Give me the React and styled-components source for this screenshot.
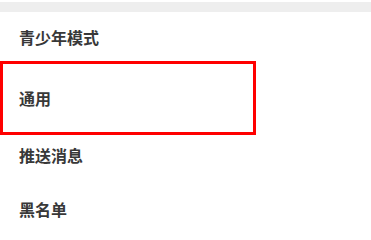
import React from "react";
import styled, { createGlobalStyle } from "styled-components";

const Global = createGlobalStyle`
  html, body { margin: 0; padding: 0; background: #fff; }
  body { font-family: "Noto Sans CJK SC", "Noto Sans", sans-serif; }
`;

const Page = styled.div`
  width: 371px;
  height: 227px;
  overflow: hidden;
  background: #fff;
  padding-top: 2px;
  box-sizing: border-box;
`;

const Divider = styled.div`
  height: 10px;
  background: #eeeeee;
`;

const List = styled.div`
  display: flex;
  flex-direction: column;
`;

const Item = styled.div`
  box-sizing: border-box;
  height: ${(p) => p.$h}px;
  padding-top: ${(p) => p.$pt}px;
  padding-left: 19px;
  font-size: 16px;
  line-height: 16px;
  font-weight: 700;
  color: #383838;
  white-space: nowrap;
`;

const HighlightItem = styled(Item)`
  width: 256px;
  border: 3px solid #ff0000;
  padding-left: 16px;
`;

export default function App() {
  return (
    <>
      <Global />
      <Page>
        <Divider />
        <List>
          <Item $h={49} $pt={17}>青少年模式</Item>
          <HighlightItem $h={74} $pt={26}>通用</HighlightItem>
          <Item $h={54} $pt={12}>推送消息</Item>
          <Item $h={38} $pt={12}>黑名单</Item>
        </List>
      </Page>
    </>
  );
}
